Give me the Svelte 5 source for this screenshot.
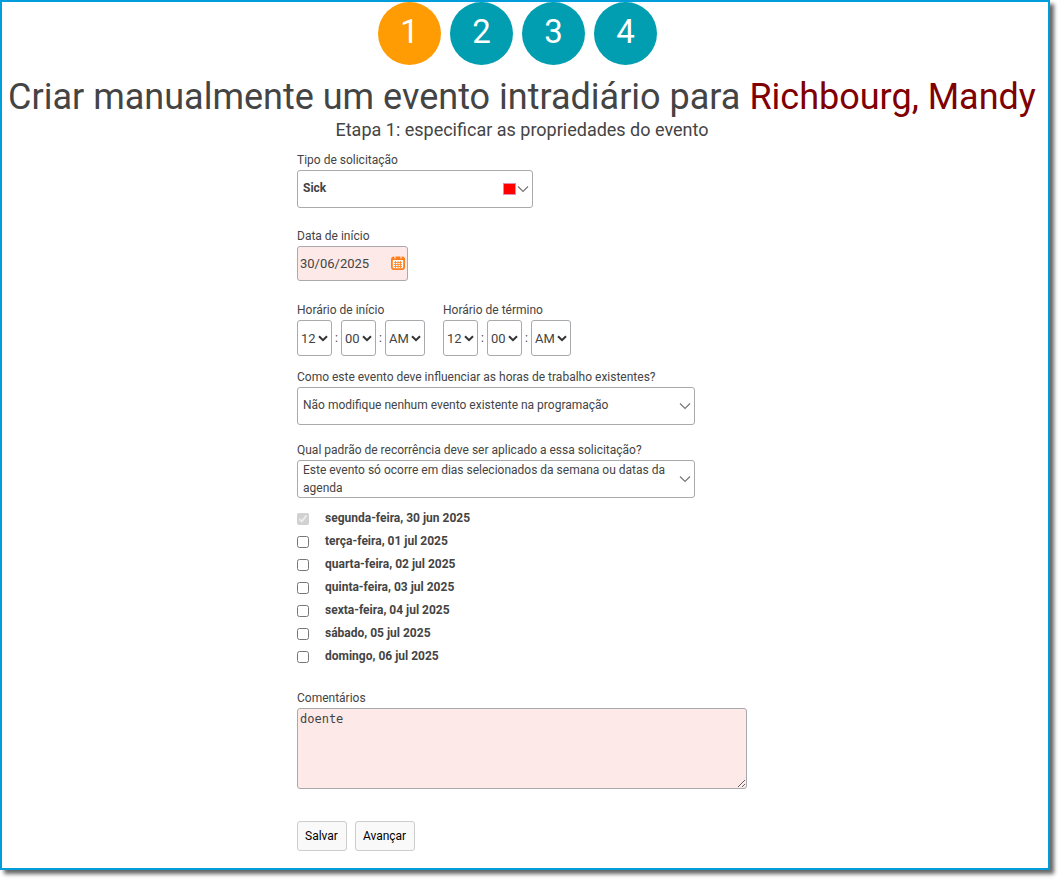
<script>
	const steps = [1, 2, 3, 4];
	let currentStep = 1;

	const employee = "Richbourg, Mandy";

	let requestType = "Sick";
	let startDate = "30/06/2025";
	let comments = "doente";

	const hours = ["12", "01", "02", "03", "04", "05", "06", "07", "08", "09", "10", "11"];
	const minutes = ["00", "15", "30", "45"];
	const periods = ["AM", "PM"];

	const parts = [
		{ key: "hour", label: "hora", options: hours },
		{ key: "minute", label: "minuto", options: minutes },
		{ key: "period", label: "período", options: periods }
	];

	let times = [
		{ label: "Horário de início", hour: "12", minute: "00", period: "AM" },
		{ label: "Horário de término", hour: "12", minute: "00", period: "AM" }
	];

	let days = [
		{ label: "segunda-feira, 30 jun 2025", checked: true, disabled: true },
		{ label: "terça-feira, 01 jul 2025", checked: false },
		{ label: "quarta-feira, 02 jul 2025", checked: false },
		{ label: "quinta-feira, 03 jul 2025", checked: false },
		{ label: "sexta-feira, 04 jul 2025", checked: false },
		{ label: "sábado, 05 jul 2025", checked: false },
		{ label: "domingo, 06 jul 2025", checked: false }
	];
</script>

<main class="window">
	<ol class="steps">
		{#each steps as step}
			<li class="step" class:active={step === currentStep}>{step}</li>
		{/each}
	</ol>

	<h1>Criar manualmente um evento intradiário para <span class="employee">{employee}</span></h1>
	<h2>Etapa 1: especificar as propriedades do evento</h2>

	<form onsubmit={(e) => e.preventDefault()}>
		<div class="field">
			<label for="request-type">Tipo de solicitação</label>
			<div class="dropdown narrow">
				<select id="request-type" class="bold" bind:value={requestType}>
					<option>Sick</option>
				</select>
				<span class="marks">
					<span class="swatch"></span>
					<svg class="chevron" viewBox="0 0 12 8"><path d="M1 1.5 6 6.5 11 1.5" /></svg>
				</span>
			</div>
		</div>

		<div class="field">
			<label for="start-date">Data de início</label>
			<div class="date">
				<input id="start-date" type="text" bind:value={startDate} />
				<button type="button" class="calendar" aria-label="Calendário">
					<svg viewBox="0 0 14 14">
						<rect x="0.9" y="1.4" width="12.2" height="11.7" rx="2" fill="#fff" stroke="#ff7f1a" stroke-width="1.8" />
						<path d="M1 1.5h12v2.5H1z" fill="#ff7f1a" />
						<path d="M4 0v2.6M10 0v2.6" stroke="#fde9e7" stroke-width="1.2" />
						<path d="M3 6.5h8M3 8.5h8M3 10.5h8M4.5 5v7M7 5v7M9.5 5v7" stroke="#ff8a30" stroke-width="0.9" />
					</svg>
				</button>
			</div>
		</div>

		<div class="times">
			{#each times as time}
				<fieldset class="field">
					<legend>{time.label}</legend>
					<div class="time">
						{#each parts as part, i}
							{#if i > 0}<span class="colon">:</span>{/if}
							<div class="part" class:period={part.key === "period"}>
								<select aria-label="{time.label} {part.label}" bind:value={time[part.key]}>
									{#each part.options as option}<option>{option}</option>{/each}
								</select>
								<svg class="arrow" viewBox="0 0 10 7"><path d="M1 1.2 5 5.2 9 1.2" /></svg>
							</div>
						{/each}
					</div>
				</fieldset>
			{/each}
		</div>

		<div class="field influence">
			<label for="influence">Como este evento deve influenciar as horas de trabalho existentes?</label>
			<div class="dropdown">
				<select id="influence">
					<option>Não modifique nenhum evento existente na programação</option>
				</select>
				<span class="marks">
					<svg class="chevron" viewBox="0 0 12 8"><path d="M1 1.5 6 6.5 11 1.5" /></svg>
				</span>
			</div>
		</div>

		<div class="field">
			<label for="recurrence">Qual padrão de recorrência deve ser aplicado a essa solicitação?</label>
			<div class="dropdown">
				<select id="recurrence" class="wrapped">
					<option>Este evento só ocorre em dias selecionados da semana ou datas da agenda</option>
				</select>
				<span class="marks">
					<svg class="chevron" viewBox="0 0 12 8"><path d="M1 1.5 6 6.5 11 1.5" /></svg>
				</span>
			</div>
		</div>

		<div class="days">
			{#each days as day}
				<label class="day">
					<input type="checkbox" bind:checked={day.checked} disabled={day.disabled} />
					{day.label}
				</label>
			{/each}
		</div>

		<div class="field comments">
			<label for="comments">Comentários</label>
			<textarea id="comments" bind:value={comments}></textarea>
		</div>

		<div class="actions">
			<button type="submit">Salvar</button>
			<button type="button">Avançar</button>
		</div>
	</form>
</main>

<style>
	:global(body) {
		background: #fff;
	}

	.window {
		box-sizing: border-box;
		margin: 0 14px 13px 0;
		padding: 0 6px 17px 0;
		border: 2px solid #009ddc;
		background: #fff;
		box-shadow: 4px 4px 4px rgba(0, 0, 0, 0.6);
		font-family: Roboto, "Liberation Sans", sans-serif;
		font-size: 12px;
		line-height: 18px;
		color: #444;
	}

	.steps {
		display: flex;
		justify-content: center;
		gap: 9px;
		margin: 0;
		padding: 0 9px 0 0;
		list-style: none;
	}

	.step {
		width: 63px;
		height: 63px;
		border-radius: 50%;
		background: #009eb0;
		color: #fff;
		font-size: 33px;
		line-height: 59px;
		text-align: center;
	}

	.step.active {
		background: #ff9c04;
	}

	h1,
	h2 {
		margin: 0;
		font-weight: 400;
		text-align: center;
	}

	h1 {
		margin-top: 10px;
		font-size: 36px;
		line-height: 44px;
	}

	.employee {
		color: #800000;
	}

	h2 {
		font-size: 18px;
		line-height: 22px;
	}

	form {
		width: 450px;
		max-width: 100%;
		margin: 10px auto 0;
	}

	.field {
		display: flex;
		flex-direction: column;
		align-items: flex-start;
		gap: 1px;
		margin: 0 0 19px;
		padding: 0;
		border: 0;
	}

	legend {
		padding: 0;
		margin-bottom: 1px;
	}

	select,
	input[type="text"],
	textarea {
		box-sizing: border-box;
		margin: 0;
		border: 1px solid #a9a9ae;
		border-radius: 3px;
		background: #fff;
		color: #444;
		font-family: inherit;
	}

	select {
		appearance: none;
		width: 100%;
	}

	.dropdown,
	.part,
	.date {
		display: grid;
		align-items: center;
	}

	.dropdown > *,
	.part > *,
	.date > * {
		grid-area: 1 / 1;
	}

	.dropdown {
		width: 398px;
		max-width: 100%;
	}

	.dropdown.narrow {
		width: 236px;
	}

	.dropdown select {
		height: 38px;
		padding: 0 24px 2px 5px;
		font-size: 12px;
		line-height: 18px;
	}

	.dropdown select.bold {
		font-weight: 700;
	}

	.dropdown select.wrapped {
		white-space: normal;
	}

	.marks {
		display: flex;
		align-items: center;
		justify-self: end;
		gap: 1px;
		margin-right: 4px;
		pointer-events: none;
	}

	.swatch {
		box-sizing: border-box;
		width: 13px;
		height: 12px;
		border: 1px solid #e08cb4;
		background: #f00;
	}

	.chevron {
		width: 12px;
		height: 8px;
		fill: none;
		stroke: #777;
		stroke-width: 1.2;
	}

	.date {
		width: 111px;
		margin-bottom: 1px;
	}

	.date input {
		width: 100%;
		height: 35px;
		padding: 0 20px 0 2px;
		background: #fde9e7;
		font-size: 13px;
	}

	.calendar {
		justify-self: end;
		width: 14px;
		height: 14px;
		margin: 0 3px 2px 0;
		padding: 0;
		border: 0;
		background: none;
	}

	.calendar svg {
		display: block;
	}

	.times {
		display: flex;
		gap: 18px;
	}

	.times .field {
		margin-bottom: 12px;
	}

	.influence {
		margin-bottom: 16px;
	}

	.time {
		display: flex;
		align-items: center;
	}

	.colon {
		width: 9px;
		text-align: center;
	}

	.part {
		width: 35px;
	}

	.part.period {
		width: 40px;
	}

	.part select {
		height: 36px;
		padding: 0 0 0 3px;
		font-size: 13px;
	}

	.arrow {
		justify-self: end;
		width: 10px;
		height: 7px;
		margin-right: 4px;
		fill: none;
		stroke: #333;
		stroke-width: 2;
		pointer-events: none;
	}

	.days {
		margin: -11px 0 22px;
	}

	.day {
		display: flex;
		align-items: center;
		gap: 16px;
		height: 23px;
		font-weight: 700;
	}

	.day input {
		width: 12px;
		height: 12px;
		margin: 2px 0 0;
	}

	.comments {
		margin-bottom: 32px;
	}

	textarea {
		width: 100%;
		height: 81px;
		padding: 3px 2px;
		background: #fde9e7;
		font-family: "DejaVu Sans Mono", monospace;
		font-size: 12px;
	}

	.actions {
		display: flex;
		gap: 8px;
	}

	.actions button {
		height: 30px;
		padding: 0 8px 0 7px;
		border: 1px solid #ccc;
		border-radius: 3px;
		background: #f9f9f9;
		color: #000;
		font-family: inherit;
		font-size: 12px;
	}
</style>
